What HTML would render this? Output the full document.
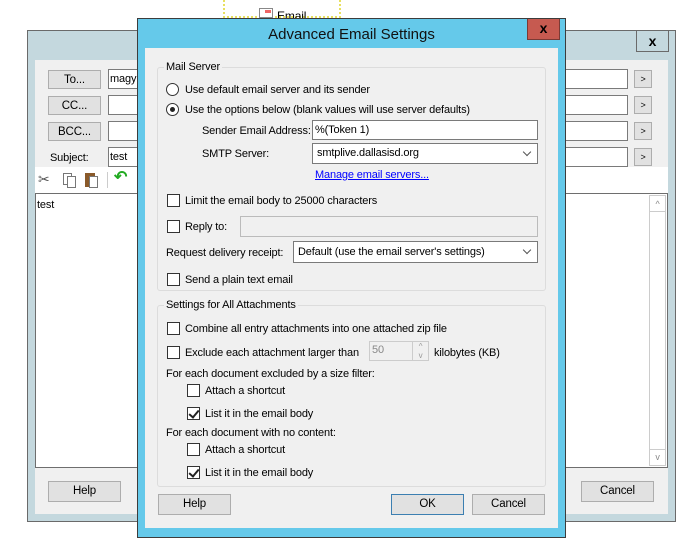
<!DOCTYPE html>
<html><head><meta charset="utf-8"><style>
*{margin:0;padding:0;box-sizing:border-box}
body{width:696px;height:534px;background:#fff;position:relative;overflow:hidden;font-family:"Liberation Sans",sans-serif;font-size:11px;letter-spacing:-0.15px;color:#000}
.a{position:absolute}
.btn{position:absolute;background:#e1e1e1;border:1px solid #adadad;text-align:center;line-height:18px;font-size:11.5px}
.inp{position:absolute;background:#fff;border:1px solid #7a7a7a;padding-left:4px;line-height:19px;font-size:11px}
.cb{position:absolute;width:13px;height:13px;border:1px solid #333;background:#fff}
.rb{position:absolute;width:13px;height:13px;border:1px solid #333;border-radius:50%;background:#fff}
.t{position:absolute;white-space:nowrap;font-size:11px;line-height:14px;margin-top:1px}
.chk:after{content:"";position:absolute;left:3px;top:0px;width:4px;height:8px;border:solid #222;border-width:0 2px 2px 0;transform:rotate(40deg)}
.grp{position:absolute;border:1px solid #dcdcdc;border-radius:3px}
.gl{position:absolute;background:#f0f0f0;padding:0 2px;top:-8px;left:6px;white-space:nowrap;line-height:14px}
.dd:after{content:"";position:absolute;right:7px;top:5px;width:5px;height:5px;border:solid #555;border-width:0 1.5px 1.5px 0;transform:rotate(45deg)}
</style></head><body>
<div class="a" style="left:223px;top:0;width:118px;height:18px;border:2px dotted #e8e060;border-top:none"></div>
<div class="a" style="left:259px;top:8px;width:14px;height:10px;border:1px solid #888;background:#fff"><div class="a" style="left:5px;top:1px;width:6px;height:3px;background:#e66"></div></div>
<div class="t" style="left:277px;top:8px;font-size:12px">Email</div>

<div class="a" style="left:27px;top:30px;width:649px;height:492px;background:#c4d8de;border:1px solid #6a6a6a"></div>
<div class="a" style="left:636px;top:31px;width:33px;height:21px;border:1px solid #6a6a6a;border-top:none;text-align:center;font-weight:bold;font-size:14px;line-height:20px">x</div>
<div class="a" style="left:35px;top:60px;width:633px;height:454px;background:#f0f0f0"></div>
<div class="a" style="left:35px;top:167px;width:633px;height:26px;background:#fff"></div>
<div class="btn" style="left:48px;top:70px;width:53px;height:19px">To...</div>
<div class="btn" style="left:48px;top:96px;width:53px;height:19px">CC...</div>
<div class="btn" style="left:48px;top:122px;width:53px;height:19px">BCC...</div>
<div class="t" style="left:50px;top:150px">Subject:</div>
<div class="inp" style="left:108px;top:69px;width:520px;height:20px;padding-left:1px">magy</div>
<div class="inp" style="left:108px;top:95px;width:520px;height:20px"></div>
<div class="inp" style="left:108px;top:121px;width:520px;height:20px"></div>
<div class="inp" style="left:108px;top:147px;width:520px;height:20px;padding-left:1px">test</div>
<div class="btn" style="left:634px;top:70px;width:18px;height:18px;font-size:9px;line-height:16px">&gt;</div>
<div class="btn" style="left:634px;top:96px;width:18px;height:18px;font-size:9px;line-height:16px">&gt;</div>
<div class="btn" style="left:634px;top:122px;width:18px;height:18px;font-size:9px;line-height:16px">&gt;</div>
<div class="btn" style="left:634px;top:148px;width:18px;height:18px;font-size:9px;line-height:16px">&gt;</div>
<div class="t" style="left:38px;top:171px;color:#555;font-size:14px">✂</div>
<div class="a" style="left:63px;top:173px;width:9px;height:12px;border:1px solid #777;background:#fff"></div>
<div class="a" style="left:67px;top:176px;width:9px;height:12px;border:1px solid #777;background:#fff"></div>
<div class="a" style="left:85px;top:173px;width:10px;height:14px;background:#8a5a2a"></div>
<div class="a" style="left:89px;top:176px;width:9px;height:12px;border:1px solid #777;background:#fff"></div>
<div class="a" style="left:107px;top:172px;width:1px;height:16px;background:#ccc"></div>
<div class="t" style="left:114px;top:170px;color:#2a2;font-size:16px;font-weight:bold">↶</div>
<div class="a" style="left:35px;top:193px;width:633px;height:275px;background:#fff;border:1px solid #6e6e6e"></div>
<div class="t" style="left:37px;top:197px">test</div>
<div class="a" style="left:649px;top:195px;width:17px;height:271px;border:1px solid #ccc;background:#fff"></div>
<div class="a" style="left:649px;top:195px;width:17px;height:17px;border:1px solid #ccc;text-align:center;font-size:9px;color:#888;line-height:16px">^</div>
<div class="a" style="left:649px;top:449px;width:17px;height:17px;border:1px solid #ccc;text-align:center;font-size:9px;color:#888;line-height:14px">v</div>
<div class="btn" style="left:48px;top:481px;width:73px;height:21px;line-height:19px">Help</div>
<div class="btn" style="left:581px;top:481px;width:73px;height:21px;line-height:19px">Cancel</div>

<div class="a" style="left:137px;top:18px;width:429px;height:520px;background:#65c9ea;border:1px solid #3c3c3c"></div>
<div class="t" style="left:137px;top:25px;width:429px;text-align:center;font-size:15px;line-height:18px;color:#111;letter-spacing:0">Advanced Email Settings</div>
<div class="a" style="left:527px;top:19px;width:33px;height:21px;background:#c65a50;border:1px solid #7a3a35;border-top:none;text-align:center;font-weight:bold;font-size:14px;line-height:18px">x</div>
<div class="a" style="left:145px;top:48px;width:413px;height:480px;background:#f0f0f0"></div>

<div class="grp" style="left:157px;top:67px;width:389px;height:224px"><div class="gl">Mail Server</div></div>
<div class="rb" style="left:166px;top:83px"></div><div class="t" style="left:185px;top:82px">Use default email server and its sender</div>
<div class="rb" style="left:166px;top:103px"><div class="a" style="left:3px;top:3px;width:5px;height:5px;border-radius:50%;background:#222"></div></div><div class="t" style="left:185px;top:102px">Use the options below (blank values will use server defaults)</div>
<div class="t" style="left:202px;top:123px">Sender Email Address:</div>
<div class="inp" style="left:312px;top:120px;width:226px;height:20px;padding-left:2px">%(Token 1)</div>
<div class="t" style="left:202px;top:146px">SMTP Server:</div>
<div class="inp dd" style="left:312px;top:143px;width:226px;height:21px">smtplive.dallasisd.org</div>
<div class="t" style="left:315px;top:167px;color:#00f;text-decoration:underline">Manage email servers...</div>
<div class="cb" style="left:167px;top:194px"></div><div class="t" style="left:185px;top:193px">Limit the email body to 25000 characters</div>
<div class="cb" style="left:167px;top:220px"></div><div class="t" style="left:185px;top:219px">Reply to:</div>
<div class="a" style="left:240px;top:216px;width:298px;height:21px;border:1px solid #bbb;background:#f0f0f0"></div>
<div class="t" style="left:166px;top:245px">Request delivery receipt:</div>
<div class="inp dd" style="left:293px;top:241px;width:245px;height:22px;line-height:20px">Default (use the email server's settings)</div>
<div class="cb" style="left:167px;top:273px"></div><div class="t" style="left:185px;top:272px">Send a plain text email</div>

<div class="grp" style="left:157px;top:305px;width:389px;height:182px"><div class="gl">Settings for All Attachments</div></div>
<div class="cb" style="left:167px;top:322px"></div><div class="t" style="left:185px;top:321px">Combine all entry attachments into one attached zip file</div>
<div class="cb" style="left:167px;top:346px"></div><div class="t" style="left:185px;top:345px">Exclude each attachment larger than</div>
<div class="a" style="left:369px;top:341px;width:60px;height:20px;border:1px solid #ccc;background:#f0f0f0;color:#888;padding-left:2px;line-height:17px">50</div>
<div class="a" style="left:412px;top:342px;width:16px;height:18px;border-left:1px solid #ccc;font-size:8px;color:#999;text-align:center;line-height:9px">^<br>v</div>
<div class="t" style="left:434px;top:345px">kilobytes (KB)</div>
<div class="t" style="left:166px;top:366px">For each document excluded by a size filter:</div>
<div class="cb" style="left:187px;top:384px"></div><div class="t" style="left:205px;top:383px">Attach a shortcut</div>
<div class="cb chk" style="left:187px;top:407px"></div><div class="t" style="left:205px;top:406px">List it in the email body</div>
<div class="t" style="left:166px;top:425px">For each document with no content:</div>
<div class="cb" style="left:187px;top:443px"></div><div class="t" style="left:205px;top:442px">Attach a shortcut</div>
<div class="cb chk" style="left:187px;top:466px"></div><div class="t" style="left:205px;top:465px">List it in the email body</div>

<div class="btn" style="left:158px;top:494px;width:73px;height:21px;line-height:19px">Help</div>
<div class="btn" style="left:391px;top:494px;width:73px;height:21px;line-height:19px;border-color:#3c7fb1">OK</div>
<div class="btn" style="left:472px;top:494px;width:73px;height:21px;line-height:19px">Cancel</div>
</body></html>
